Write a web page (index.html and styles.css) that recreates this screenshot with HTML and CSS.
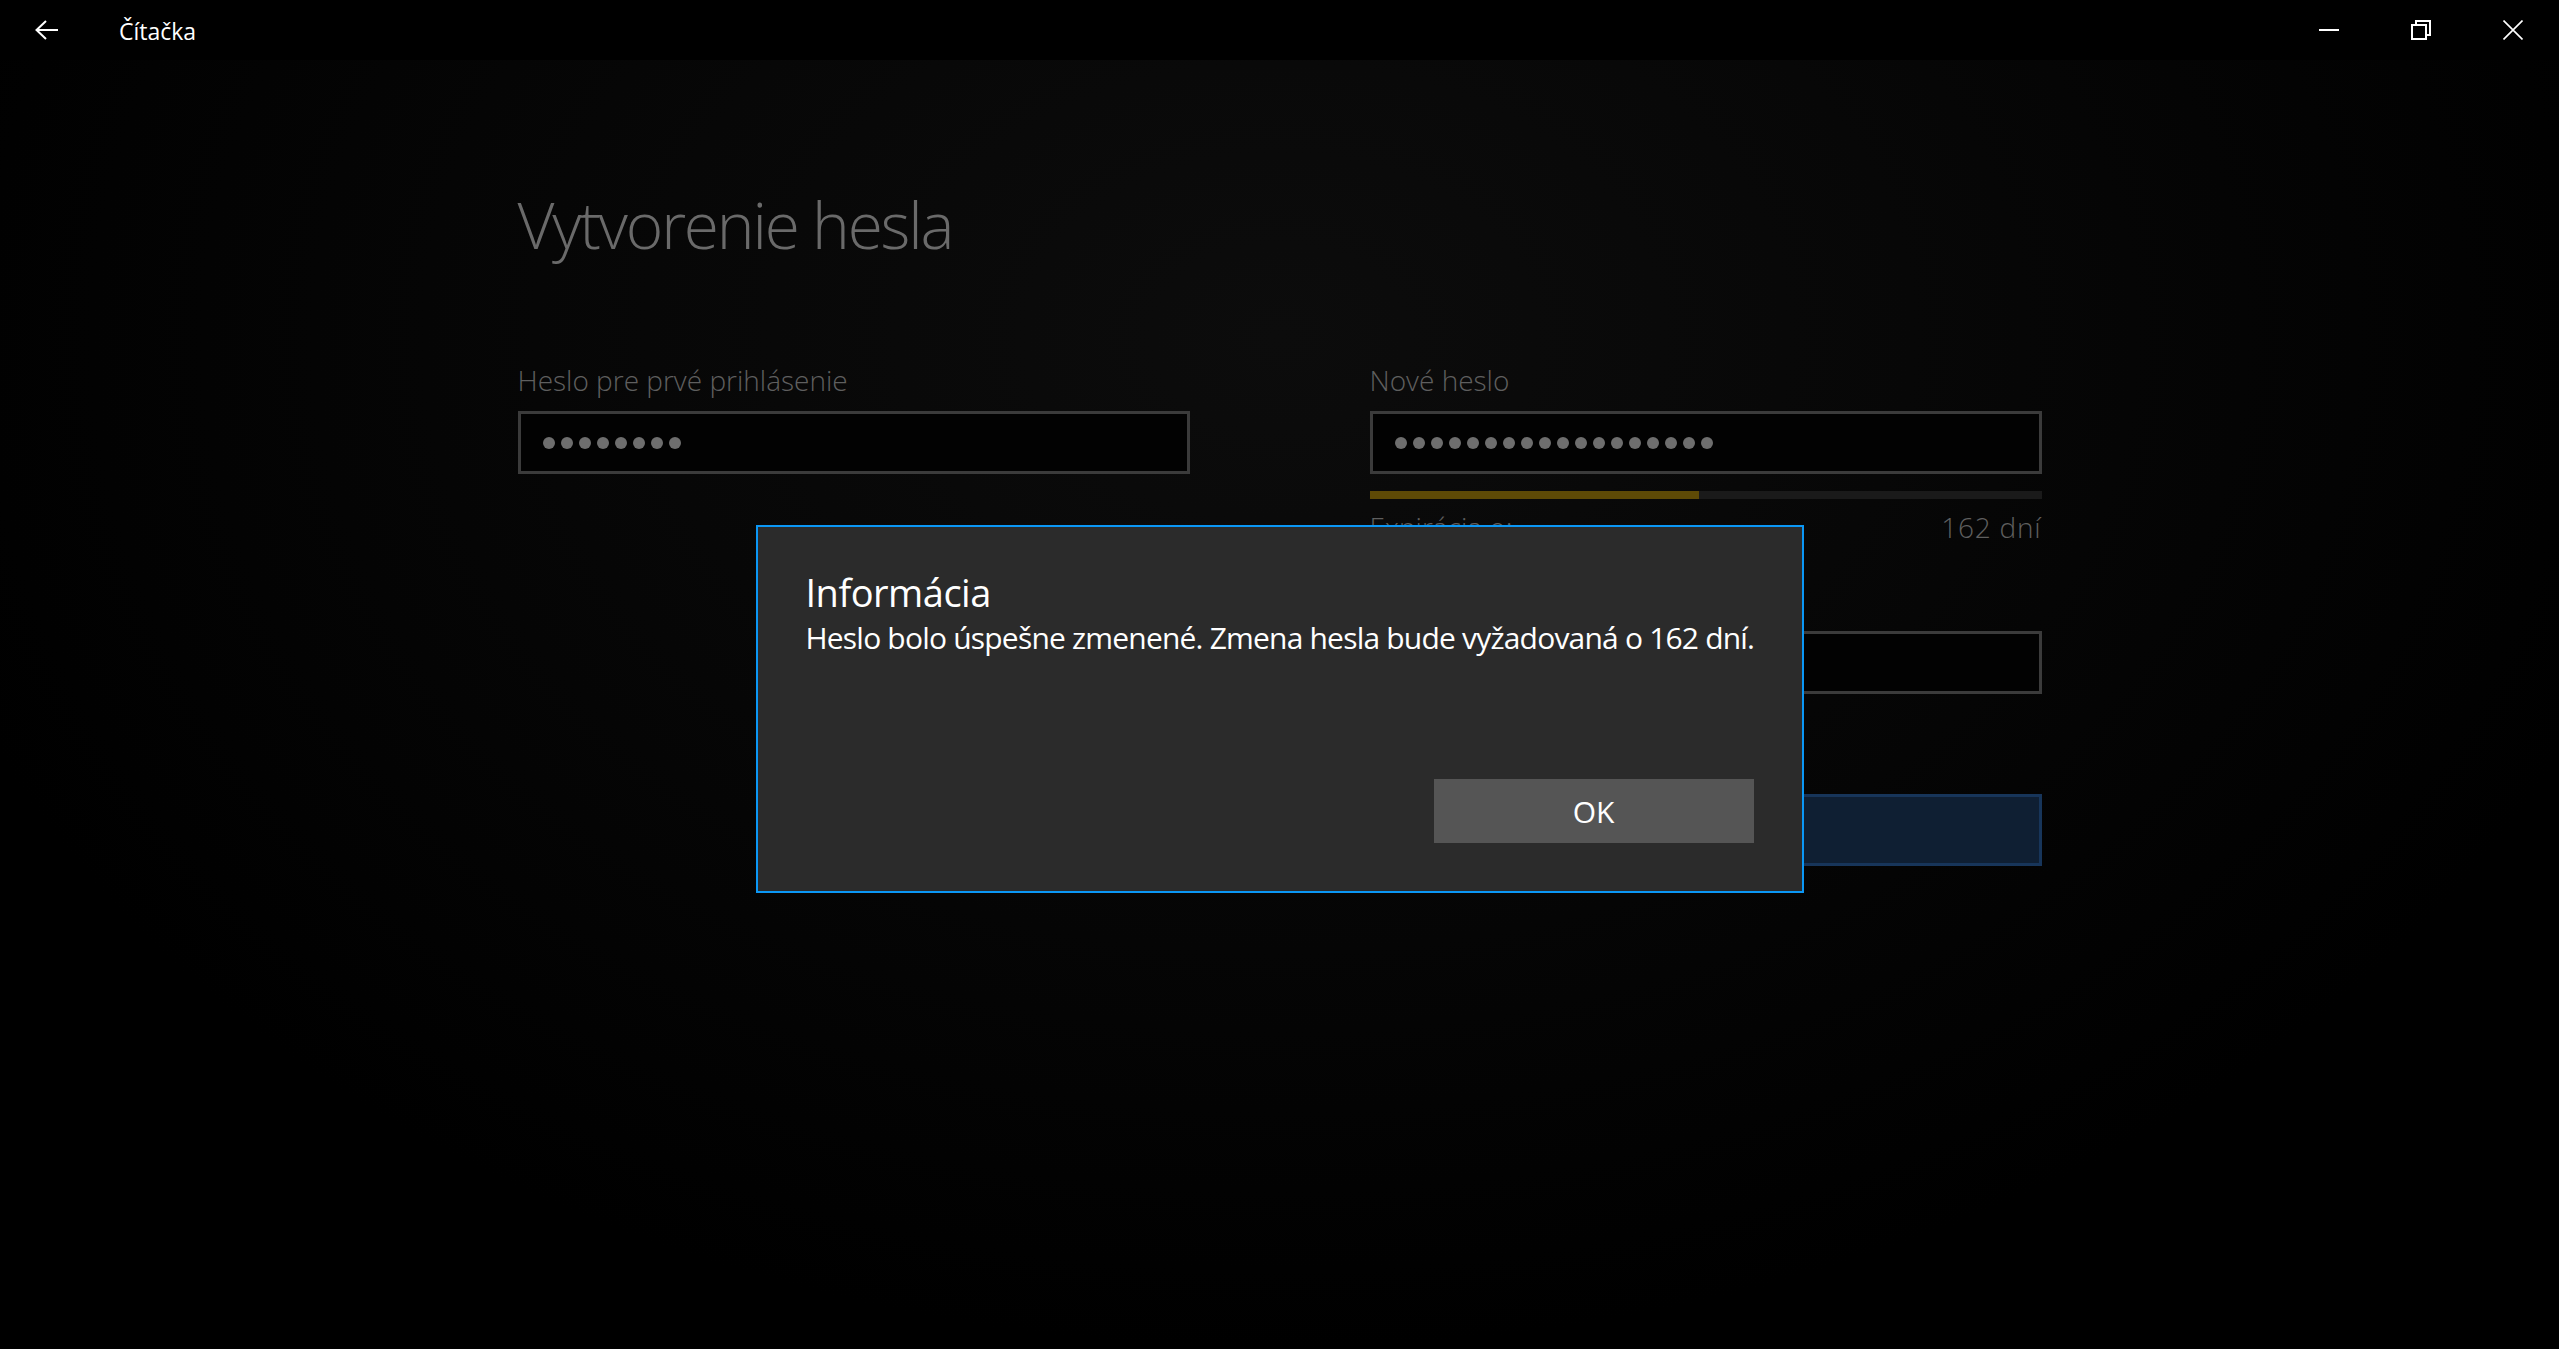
FILE: index.html
```html
<!DOCTYPE html>
<html lang="sk">
<head>
    <meta charset="UTF-8">
    <meta name="viewport" content="width=device-width, initial-scale=1.0">
    <title>Čítačka</title>
    <link rel="stylesheet" href="styles.css">
</head>
<body>
    <div class="titlebar">
        <button class="back-button" title="Späť">
            <svg width="24" height="20" viewBox="0 0 24 20">
                <path d="M1.5 10 H23 M11 1 L1.5 10 L11 19" fill="none" stroke="#fff" stroke-width="2"/>
            </svg>
        </button>
        <span class="app-title">Čítačka</span>
        <div class="window-controls">
            <button class="caption-button" title="Minimalizovať">
                <svg width="20" height="20" viewBox="0 0 20 20">
                    <path d="M0 10 H20" stroke="#fff" stroke-width="2"/>
                </svg>
            </button>
            <button class="caption-button" title="Obnoviť">
                <svg width="20" height="20" viewBox="0 0 20 20">
                    <rect x="1" y="5" width="14" height="14" fill="none" stroke="#fff" stroke-width="2"/>
                    <path d="M5 4 V1 H19 V15 H16" fill="none" stroke="#fff" stroke-width="2"/>
                </svg>
            </button>
            <button class="caption-button" title="Zavrieť">
                <svg width="20" height="20" viewBox="0 0 20 20">
                    <path d="M0.5 0.5 L19.5 19.5 M19.5 0.5 L0.5 19.5" stroke="#fff" stroke-width="1.6"/>
                </svg>
            </button>
        </div>
    </div>

    <div class="page">
        <h1>Vytvorenie hesla</h1>

        <div class="form">
            <div class="column">
                <label class="field-label">Heslo pre prvé prihlásenie</label>
                <div class="password-box">
                    <span class="dot"></span><span class="dot"></span><span class="dot"></span><span class="dot"></span>
                    <span class="dot"></span><span class="dot"></span><span class="dot"></span><span class="dot"></span>
                </div>
            </div>

            <div class="column">
                <label class="field-label">Nové heslo</label>
                <div class="password-box">
                    <span class="dot"></span><span class="dot"></span><span class="dot"></span><span class="dot"></span>
                    <span class="dot"></span><span class="dot"></span><span class="dot"></span><span class="dot"></span>
                    <span class="dot"></span><span class="dot"></span><span class="dot"></span><span class="dot"></span>
                    <span class="dot"></span><span class="dot"></span><span class="dot"></span><span class="dot"></span>
                    <span class="dot"></span><span class="dot"></span>
                </div>
                <div class="strength">
                    <div class="strength-fill" style="width: 49%;"></div>
                </div>
                <div class="expiry">
                    <span>Expirácia o:</span>
                    <span class="expiry-value">162 dní</span>
                </div>

                <label class="field-label confirm-label">Potvrdenie nového hesla</label>
                <div class="password-box"></div>

                <button class="primary-button">Zmeniť heslo</button>
            </div>
        </div>
    </div>

    <div class="overlay">
        <div class="dialog">
            <div class="dialog-title">Informácia</div>
            <div class="dialog-text">Heslo bolo úspešne zmenené. Zmena hesla bude vyžadovaná o 162 dní.</div>
            <div class="dialog-buttons">
                <button class="dialog-button">OK</button>
            </div>
        </div>
    </div>
</body>
</html>
```

FILE: styles.css
```css
body {
    margin: 0;
    height: 100vh;
    overflow: hidden;
    font-family: "Open Sans", "Noto Sans", sans-serif;
    background-color: #000;
    background-image: radial-gradient(ellipse 55% 75% at 50% 25%, #0c0c0c 0%, #070707 45%, #000 100%);
    color: #fff;
}
button {
    font-family: inherit;
    border: none;
    background: none;
    color: inherit;
    padding: 0;
}
.titlebar {
    height: 60px;
    background-color: #000;
    display: flex;
    align-items: center;
}
.back-button {
    width: 94px;
    height: 60px;
    display: flex;
    align-items: center;
    justify-content: center;
}
.app-title {
    margin-left: 25px;
    font-size: 23px;
    line-height: 60px;
    padding-top: 1px;
}
.window-controls {
    margin-left: auto;
    display: flex;
}
.caption-button {
    width: 92px;
    height: 60px;
    display: flex;
    align-items: center;
    justify-content: center;
}
.page {
    width: 1524px;
    margin: 0 auto;
    padding-top: 125px;
}
h1 {
    margin: 0;
    font-size: 64px;
    font-weight: 300;
    line-height: 80px;
    color: #6a6a6a;
    letter-spacing: -2.2px;
}
.form {
    margin-top: 97px;
    display: grid;
    grid-template-columns: 1fr 1fr;
    column-gap: 180px;
    align-items: start;
}
.column {
    display: flex;
    flex-direction: column;
}
.field-label {
    font-size: 28px;
    font-weight: 300;
    line-height: 36px;
    color: #5f5f5f;
    margin-bottom: 13px;
}
.confirm-label {
    margin-top: 37px;
}
.password-box {
    box-sizing: border-box;
    height: 63px;
    border: 3px solid #3b3b3b;
    background-color: #020202;
    padding-left: 22px;
    display: flex;
    align-items: center;
    gap: 6px;
}
.dot {
    width: 12px;
    height: 12px;
    border-radius: 50%;
    background-color: #6e6e6e;
}
.strength {
    margin-top: 17px;
    height: 8px;
    background-color: #1a1a1a;
}
.strength-fill {
    height: 100%;
    background-color: #5e4a06;
}
.expiry {
    margin-top: 10px;
    display: flex;
    justify-content: space-between;
    font-size: 28px;
    font-weight: 300;
    line-height: 36px;
    color: #5f5f5f;
}
.expiry-value {
    letter-spacing: 0.8px;
}
.primary-button {
    margin-top: 100px;
    box-sizing: border-box;
    height: 72px;
    border: 3px solid #17355a;
    background-color: #0f1f33;
    font-size: 30px;
    color: #4a5a6c;
}
.overlay {
    position: fixed;
    top: 60px;
    left: 0;
    right: 0;
    bottom: 0;
    padding-top: 9px;
    display: flex;
    align-items: center;
    justify-content: center;
}
.dialog {
    box-sizing: border-box;
    width: 1048px;
    height: 368px;
    padding: 40px 48px 48px;
    border: 2px solid #0b97f5;
    background-color: #2b2b2b;
    display: flex;
    flex-direction: column;
}
.dialog-title {
    font-size: 38px;
    line-height: 50px;
    letter-spacing: -0.5px;
}
.dialog-text {
    margin-top: 3px;
    font-size: 30px;
    line-height: 36px;
    letter-spacing: -0.8px;
    white-space: nowrap;
}
.dialog-buttons {
    margin-top: auto;
    display: flex;
    justify-content: flex-end;
}
.dialog-button {
    width: 320px;
    height: 64px;
    background-color: #555;
    font-size: 30px;
    color: #fff;
}
```
